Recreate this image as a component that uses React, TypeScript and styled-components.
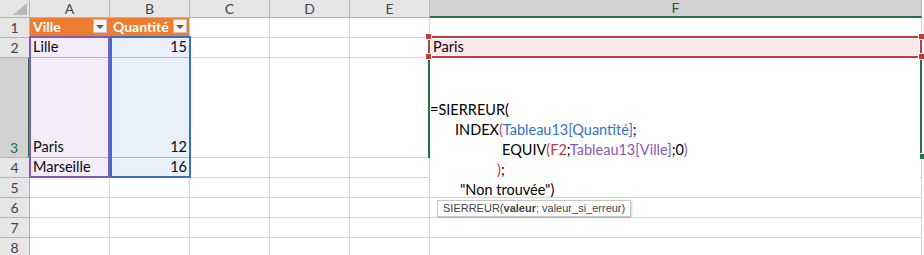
import React from 'react';
import styled, { createGlobalStyle } from 'styled-components';

const GRID = '#d4d4d4';
const HEAD_LINE = '#b5b5b5';
const GREEN = '#217346';
const ORANGE = '#ed7d31';
const BAND = '#f4b084';
const PURPLE = '#8458b8';
const BLUE = '#3a6fc8';
const RED = '#c2393f';

const GlobalStyle = createGlobalStyle`
  html, body {
    margin: 0;
    padding: 0;
    background: #ffffff;
  }
  body {
    width: 924px;
    height: 255px;
    overflow: hidden;
  }
`;

const Sheet = styled.div`
  display: grid;
  grid-template-columns: 30px repeat(5, 80px) 492px;
  grid-template-rows: 18px 20px 20px 100px repeat(5, 20px);
  font-family: Lato, 'Open Sans', sans-serif;
  font-size: 14.5px;
  color: #000;
`;

const Corner = styled.div`
  grid-row: 1;
  grid-column: 1;
  background: #e6e6e6;
  border-right: 1px solid ${HEAD_LINE};
  border-bottom: 1px solid ${HEAD_LINE};
  box-sizing: border-box;
  display: flex;
  align-items: flex-end;
  justify-content: flex-end;
  padding: 0 2px 2px 0;
`;

const ColHead = styled.div<{ $c: number; $active?: boolean }>`
  grid-row: 1;
  grid-column: ${(p) => p.$c};
  background: ${(p) => (p.$active ? '#d2d2d2' : '#e6e6e6')};
  color: ${(p) => (p.$active ? '#1e5c3a' : '#444')};
  border-right: 1px solid ${HEAD_LINE};
  border-bottom: ${(p) => (p.$active ? `2px solid ${GREEN}` : `1px solid ${HEAD_LINE}`)};
  box-sizing: border-box;
  display: flex;
  align-items: center;
  justify-content: center;
  font-size: 14px;
  line-height: 16px;
`;

const RowHead = styled.div<{ $r: number; $active?: boolean }>`
  grid-row: ${(p) => p.$r};
  grid-column: 1;
  background: ${(p) => (p.$active ? '#d2d2d2' : '#e6e6e6')};
  color: ${(p) => (p.$active ? GREEN : '#444')};
  border-right: ${(p) => (p.$active ? `2px solid ${GREEN}` : `1px solid ${HEAD_LINE}`)};
  border-bottom: 1px solid ${HEAD_LINE};
  box-sizing: border-box;
  display: flex;
  align-items: flex-end;
  justify-content: center;
  padding-bottom: 1px;
  font-size: 14px;
  line-height: 17px;
`;

const Cell = styled.div<{ $r: number; $c: number; $line?: string; $lineR?: string; $right?: boolean }>`
  grid-row: ${(p) => p.$r};
  grid-column: ${(p) => p.$c};
  display: flex;
  align-items: flex-end;
  justify-content: ${(p) => (p.$right ? 'flex-end' : 'flex-start')};
  padding: 0 2px 1px 3px;
  background: #fff;
  border-right: 1px solid ${(p) => p.$lineR || GRID};
  border-bottom: 1px solid ${(p) => p.$line || GRID};
  box-sizing: border-box;
  line-height: 18px;
  white-space: nowrap;
  overflow: hidden;
`;

const TableHead = styled(Cell)`
  background: ${ORANGE};
  color: #fff;
  font-weight: 700;
  font-size: 14px;
  justify-content: space-between;
  padding-right: 2px;
`;

const FilterBtn = styled.span`
  align-self: flex-start;
  margin-top: 1px;
  width: 14px;
  height: 14px;
  box-sizing: border-box;
  background: #f4f4f4;
  border: 1px solid #c4c4c4;
  display: flex;
  align-items: center;
  justify-content: center;

  &::after {
    content: '';
    width: 0;
    height: 0;
    border-left: 4px solid transparent;
    border-right: 4px solid transparent;
    border-top: 4px solid #5a5a5a;
    margin-top: 1px;
  }
`;

const Range = styled.div<{ $r: string; $c: number; $color: string; $fill: string; $m: string }>`
  grid-row: ${(p) => p.$r};
  grid-column: ${(p) => p.$c};
  margin: ${(p) => p.$m};
  border: 2px solid ${(p) => p.$color};
  background: ${(p) => p.$fill};
  position: relative;
  z-index: 2;
  pointer-events: none;
`;

const RefRange = styled(Range)`
  box-shadow: inset 0 0 0 1px #fff;
  z-index: 4;
`;

const Handle = styled.span<{ $pos: string; $color: string }>`
  position: absolute;
  width: 5px;
  height: 5px;
  background: ${(p) => p.$color};
  box-shadow: 0 0 0 1px #fff;
  ${(p) => p.$pos}
`;

const Selection = styled.div`
  grid-row: 4;
  grid-column: 7;
  margin: -2px 0 0 -2px;
  border: 2px solid ${GREEN};
  position: relative;
  z-index: 3;
`;

const EditBox = styled.div`
  grid-row: 4 / 7;
  grid-column: 7;
  margin: 0 2px 1px 0;
  background: #fff;
  z-index: 3;
  display: flex;
  flex-direction: column;
  justify-content: flex-end;
  line-height: 20px;
  white-space: pre;
`;

const FormulaLine = styled.div<{ $indent: number }>`
  padding-left: ${(p) => p.$indent}px;

  &:last-child {
    margin-bottom: -3px;
  }
`;

const Tok = styled.span<{ $color: string }>`
  color: ${(p) => p.$color};
`;

const Tip = styled.div`
  grid-row: 7;
  grid-column: 7;
  justify-self: start;
  align-self: start;
  margin: 2px 0 0 7px;
  height: 17px;
  box-sizing: border-box;
  padding: 0 5px;
  background: #fff;
  border: 1px solid #c6c6c6;
  box-shadow: 1px 1px 2px rgba(0, 0, 0, 0.18);
  font-family: 'Liberation Sans', Arial, sans-serif;
  font-size: 11px;
  line-height: 15px;
  color: #444;
  white-space: nowrap;
  z-index: 5;
`;

const cols = ['A', 'B', 'C', 'D', 'E', 'F'];
const rows = [1, 2, 3, 4, 5, 6, 7, 8];

const tableData: Record<number, [string, string]> = {
  2: ['Lille', '15'],
  3: ['Paris', '12'],
  4: ['Marseille', '16'],
};

export default function App() {
  const cells: React.ReactNode[] = [];
  rows.forEach((row) => {
    const r = row + 1;
    cols.forEach((col, i) => {
      const c = i + 2;
      if (row === 1 && col === 'A') {
        cells.push(
          <TableHead key={col + row} $r={r} $c={c} $lineR={ORANGE}>
            Ville<FilterBtn />
          </TableHead>
        );
        return;
      }
      if (row === 1 && col === 'B') {
        cells.push(
          <TableHead key={col + row} $r={r} $c={c}>
            Quantité<FilterBtn />
          </TableHead>
        );
        return;
      }
      const data = tableData[row];
      if (data && (col === 'A' || col === 'B')) {
        cells.push(
          <Cell key={col + row} $r={r} $c={c} $right={col === 'B'} $line={row < 4 ? BAND : GRID}>
            {col === 'A' ? data[0] : data[1]}
          </Cell>
        );
        return;
      }
      cells.push(
        <Cell key={col + row} $r={r} $c={c}>
          {row === 2 && col === 'F' ? 'Paris' : ''}
        </Cell>
      );
    });
  });

  return (
    <>
      <GlobalStyle />
      <Sheet>
        <Corner>
          <svg width="14" height="12" viewBox="0 0 14 12">
            <polygon points="14,0 14,12 0,12" fill="#b8b8b8" />
          </svg>
        </Corner>
        {cols.map((col, i) => (
          <ColHead key={col} $c={i + 2} $active={col === 'F'}>
            {col}
          </ColHead>
        ))}
        {rows.map((row) => (
          <RowHead key={row} $r={row + 1} $active={row === 3}>
            {row}
          </RowHead>
        ))}
        {cells}

        <Range $r="3 / 6" $c={2} $color={PURPLE} $fill="rgba(130, 80, 180, 0.1)" $m="-2px 0 0 -1px" />
        <Range $r="3 / 6" $c={3} $color={BLUE} $fill="rgba(47, 110, 200, 0.1)" $m="-2px -1px 0 0" />

        <Selection>
          <Handle $color={GREEN} $pos="right: -4px; bottom: -3px;" />
        </Selection>

        <EditBox>
          <FormulaLine $indent={0}>=SIERREUR(</FormulaLine>
          <FormulaLine $indent={25}>
            INDEX<Tok $color="#d6455a">(</Tok>
            <Tok $color={BLUE}>Tableau13[Quantité]</Tok>;
          </FormulaLine>
          <FormulaLine $indent={72}>
            EQUIV<Tok $color={RED}>(</Tok>
            <Tok $color={RED}>F2</Tok>;<Tok $color={PURPLE}>Tableau13[Ville]</Tok>;0<Tok $color={PURPLE}>)</Tok>
          </FormulaLine>
          <FormulaLine $indent={67}>
            <Tok $color={RED}>)</Tok>;
          </FormulaLine>
          <FormulaLine $indent={30}>"Non trouvée")</FormulaLine>
        </EditBox>

        <RefRange $r="3" $c={7} $color={RED} $fill="rgba(200, 50, 60, 0.11)" $m="-2px 0 0 -2px">
          <Handle $color={RED} $pos="left: -4px; top: -4px;" />
          <Handle $color={RED} $pos="right: -4px; top: -4px;" />
          <Handle $color={RED} $pos="left: -4px; bottom: -3px;" />
          <Handle $color={RED} $pos="right: -4px; bottom: -3px;" />
        </RefRange>

        <Tip>
          SIERREUR(<b>valeur</b>; valeur_si_erreur)
        </Tip>
      </Sheet>
    </>
  );
}
